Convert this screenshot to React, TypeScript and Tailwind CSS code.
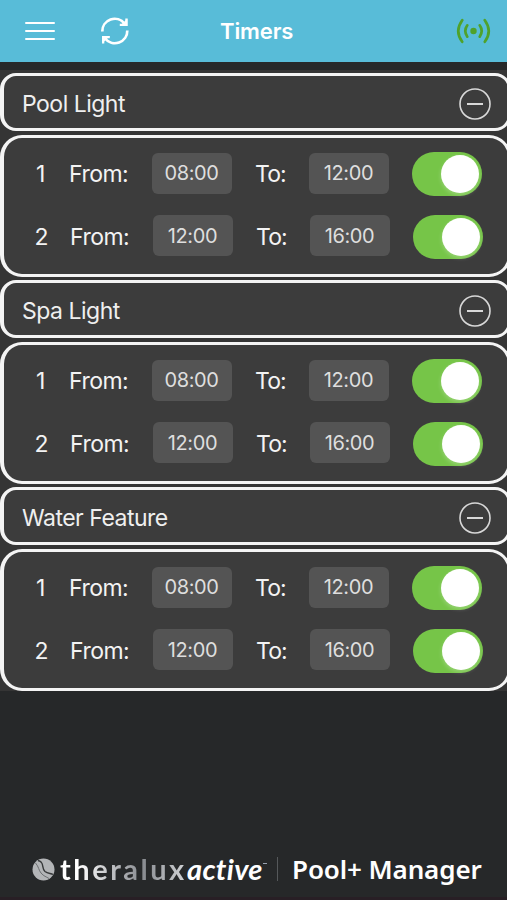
import React, { useState } from "react";

type Slot = {
  from: string;
  to: string;
  enabled: boolean;
};

type Timer = {
  name: string;
  slots: Slot[];
};

const defaultSlots: Slot[] = [
  { from: "08:00", to: "12:00", enabled: true },
  { from: "12:00", to: "16:00", enabled: true },
];

const initialTimers: Timer[] = [
  { name: "Pool Light", slots: defaultSlots },
  { name: "Spa Light", slots: defaultSlots },
  { name: "Water Feature", slots: defaultSlots },
];

const Header: React.FC = () => (
  <header className="flex h-[62px] items-center bg-[#58bcd8] text-white">
    <button className="ml-[25px] flex w-[30px] flex-col gap-[5.5px]">
      <span className="h-[2.5px] w-full rounded-full bg-white" />
      <span className="h-[2.5px] w-full rounded-full bg-white" />
      <span className="h-[2.5px] w-full rounded-full bg-white" />
    </button>
    <button className="ml-[45px]">
      <svg width="30" height="30" viewBox="0 0 30 30" fill="none" stroke="currentColor" strokeWidth="2.7">
        <path d="M2.3 15.5A12.4 12.4 0 0 1 24.5 7.6" />
        <path d="M27.3 14.5A12.4 12.4 0 0 1 5.1 22.4" />
        <path d="M27.5 2.5V10H19.8Z" fill="currentColor" stroke="none" />
        <path d="M26.4 2.5V8.9H19.8" strokeWidth="2.2" />
        <path d="M2.1 27.5V20H9.8Z" fill="currentColor" stroke="none" />
        <path d="M3.2 27.5V21.1H9.8" strokeWidth="2.2" />
      </svg>
    </button>
    <h1 className="ml-[90px] w-[76px] whitespace-nowrap text-[22px] font-semibold leading-[28px] tracking-[-0.1px]">
      Timers
    </h1>
    <svg
      className="ml-[160px] shrink-0"
      width="36"
      height="28"
      viewBox="0 0 36 28"
      fill="none"
      stroke="#4fa22b"
      strokeWidth="2.7"
      strokeLinecap="round"
    >
      <circle cx="17.5" cy="14" r="3.2" fill="#4fa22b" stroke="none" />
      <path d="M11.3 8.3Q7.3 14 11.3 19.7M23.7 8.3Q27.7 14 23.7 19.7" />
      <path d="M6.2 3.2Q-1.7 14 6.2 24.8M28.8 3.2Q36.7 14 28.8 24.8" />
    </svg>
  </header>
);

const Toggle: React.FC<{ on: boolean; onClick: () => void }> = ({ on, onClick }) => (
  <button
    onClick={onClick}
    className={`flex h-[44px] w-[70px] shrink-0 items-center rounded-full px-[2.5px] ${
      on ? "justify-end bg-[#76c548]" : "justify-start bg-[#666666]"
    }`}
  >
    <span className="size-[38px] rounded-full bg-white shadow-[0_2px_4px_rgba(255,255,255,0.25)]" />
  </button>
);

const Logo: React.FC = () => (
  <div className="flex items-center">
    <svg width="23" height="23" viewBox="0 0 23 23">
      <circle cx="11.5" cy="11.5" r="11" fill="#b3b5b7" />
      <path d="M6 2.5C13 4 9 10 13 13.5C16 16 19 15 21 16.5" fill="none" stroke="#37393a" strokeWidth="1.4" />
      <path d="M3.5 5C7 9 6.500 12 9 15C12 18.5 14 18.500 17 20.500" fill="none" stroke="#6b6e70" strokeWidth="1" />
    </svg>
    <span className="ml-[5px] w-[127px] whitespace-nowrap bg-linear-to-r from-white from-15% via-[#888b90] via-65% to-[#d4d6d8] bg-clip-text font-['Lato','Noto_Sans',sans-serif] text-[29px] font-bold leading-[34px] tracking-[2.5px] text-transparent">
      theralux
    </span>
    <span className="w-[76px] whitespace-nowrap font-['Lato','Noto_Sans',sans-serif] text-[29px] font-bold italic leading-[34px] tracking-[0.3px]">
      active
    </span>
    <span className="mb-[12px] h-px w-[4px] bg-gray-400" />
  </div>
);

const App: React.FC = () => {
  const [timers, setTimers] = useState<Timer[]>(initialTimers);
  const [closed, setClosed] = useState<string[]>([]);

  const toggleSlot = (name: string, index: number) => {
    setTimers(
      timers.map((timer) =>
        timer.name === name
          ? {
              ...timer,
              slots: timer.slots.map((slot, i) => (i === index ? { ...slot, enabled: !slot.enabled } : slot)),
            }
          : timer
      )
    );
  };

  const toggleSection = (name: string) => {
    setClosed(closed.includes(name) ? closed.filter((n) => n !== name) : [...closed, name]);
  };

  return (
    <div className="flex h-[900px] w-[507px] flex-col overflow-hidden border-b-[3px] border-[#281f25] bg-[#262829] font-['Inter','Liberation_Sans',sans-serif] text-white">
      <Header />

      {/* timer list, the cards run past the right edge */}
      <main className="mt-[8px] w-[511px] bg-[#353535] pt-[3px]">
        {timers.map((timer, t) => (
          <section key={timer.name} className={t === 0 ? "" : "mt-[3px]"}>
            <div className="flex h-[58px] items-center rounded-[16px] border-[3px] border-l-[4px] border-[#f4f4f4] bg-[#3c3c3c] pl-[18px]">
              <h2 className="w-[437px] pt-[4px] text-[23px] leading-[28px] tracking-[-0.5px] text-[#efefef]">{timer.name}</h2>
              <button onClick={() => toggleSection(timer.name)} className="mt-[3px]">
                <svg width="32" height="32" viewBox="0 0 32 32" fill="none" stroke="#d8d8d8">
                  <circle cx="16" cy="16" r="15" strokeWidth="1.6" />
                  <path d="M8 16H24" strokeWidth="2" />
                  {closed.includes(timer.name) && <path d="M16 8V24" strokeWidth="2" />}
                </svg>
              </button>
            </div>

            {!closed.includes(timer.name) && (
              <div className="mt-[4px] flex h-[142px] flex-col gap-[18.5px] rounded-[22px] border-[3px] border-l-[4px] border-[#f4f4f4] bg-[#3c3c3c] pt-[14px]">
                {timer.slots.map((slot, i) => (
                  <div
                    key={i}
                    className={`flex h-[44px] items-center text-[23px] leading-[28px] text-[#f3f3f3] ${
                      i === 0 ? "pl-[32px]" : "pl-[30.5px]"
                    }`}
                  >
                    <span className={i === 0 ? "w-[33px]" : "w-[35.5px]"}>{i + 1}</span>
                    <span className="w-[82.5px] tracking-[-0.5px]">From:</span>
                    <span className="mb-[2px] flex h-[41px] w-[80px] items-center justify-center rounded-[6px] bg-[#545454] text-[20px] tracking-[-0.4px] text-[#dedede]">
                      {slot.from}
                    </span>
                    <span className="ml-[23.5px] w-[53.5px] tracking-[-0.9px]">To:</span>
                    <span className="mb-[2px] flex h-[41px] w-[80px] items-center justify-center rounded-[6px] bg-[#545454] text-[20px] tracking-[-0.4px] text-[#dedede]">
                      {slot.to}
                    </span>
                    <span className="ml-[23px] flex">
                      <Toggle on={slot.enabled} onClick={() => toggleSlot(timer.name, i)} />
                    </span>
                  </div>
                ))}
              </div>
            )}
          </section>
        ))}
      </main>

      <footer className="mt-auto mb-[11px] flex h-[34px] items-center pl-[32px]">
        <Logo />
        <span className="ml-[10px] h-[24px] w-px bg-[#55585a]" />
        <span className="ml-[14px] whitespace-nowrap font-['Noto_Sans',sans-serif] text-[26px] font-semibold leading-[32px] tracking-[-0.1px]">
          Pool+ Manager
        </span>
      </footer>
    </div>
  );
};

export default App;
